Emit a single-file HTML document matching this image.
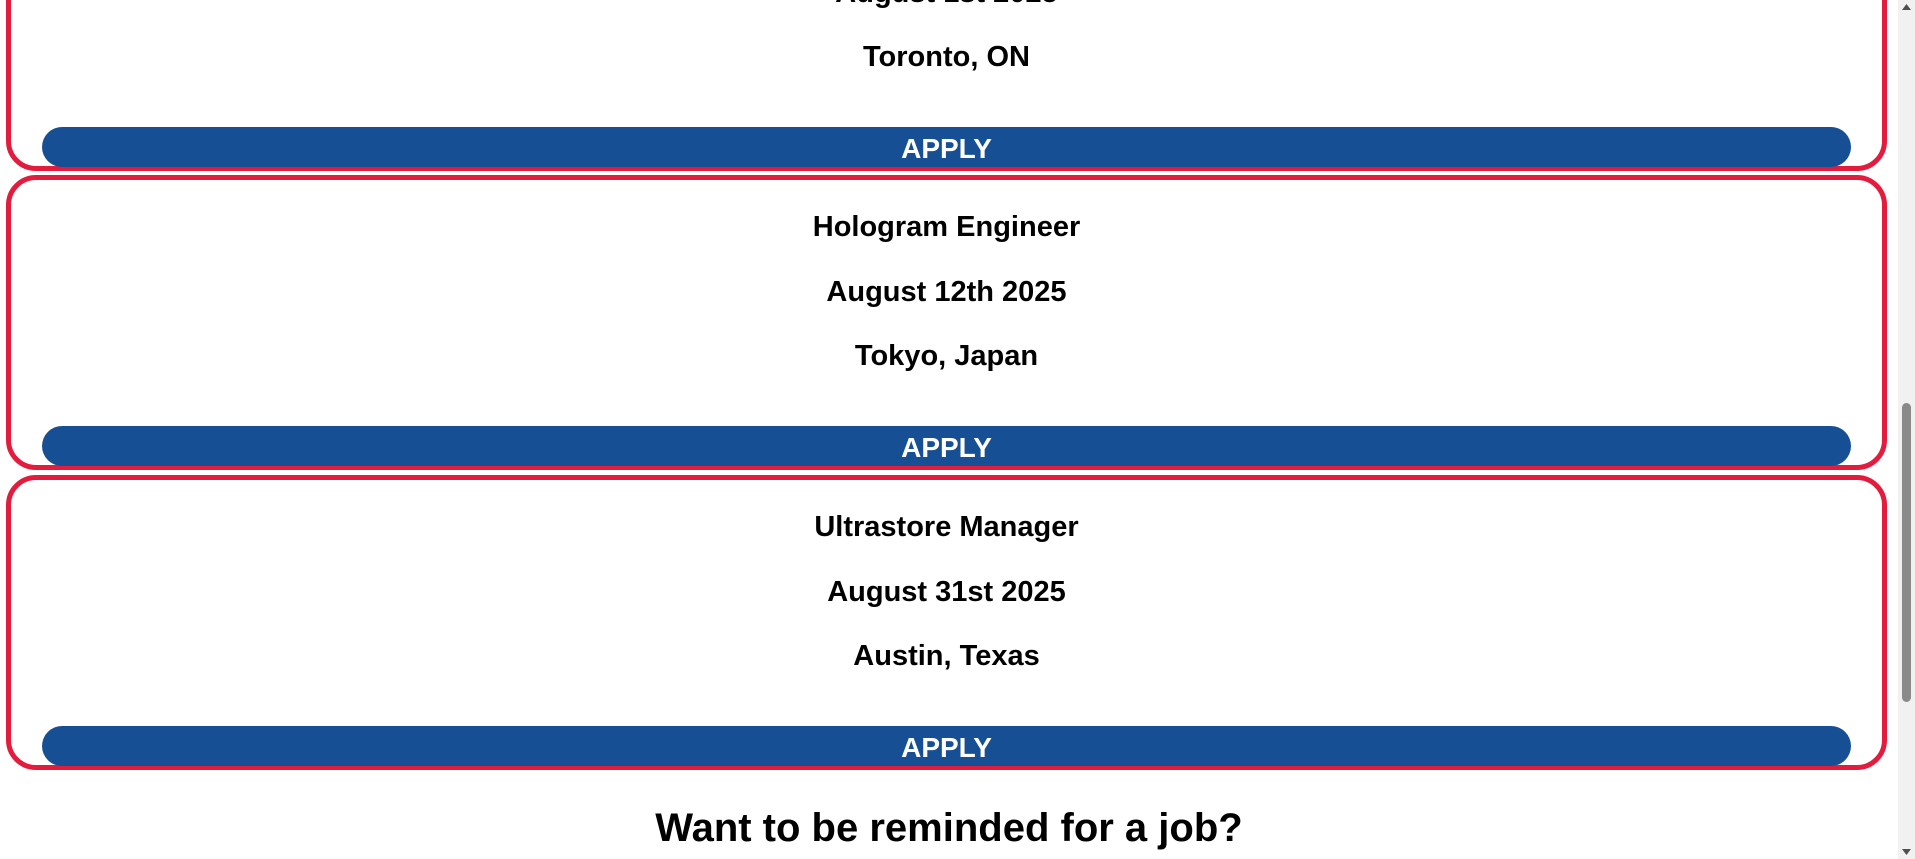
<!DOCTYPE html>
<html><head><meta charset="utf-8"><style>
html,body{margin:0;padding:0;width:1915px;height:859px;overflow:hidden;background:#fff;font-family:"Liberation Sans",Arial,sans-serif;}
.card{position:absolute;left:6px;width:1871px;height:285px;border:5px solid #e31b3d;border-radius:30px;box-sizing:content-box;}
.t{position:absolute;left:0;right:0;text-align:center;font-weight:bold;font-size:29px;color:#000;line-height:30px;}
.btn{position:absolute;left:31px;right:31px;top:246px;height:40px;background:#174f95;border-radius:20px;color:#fff;font-weight:bold;font-size:28px;text-align:center;line-height:44px;}
h2{position:absolute;left:0;width:1898px;top:806px;margin:0;text-align:center;font-size:40px;line-height:44px;font-weight:bold;}
.sb{position:absolute;right:0;top:0;width:17px;height:859px;background:#f1f1f1;}
.thumb{position:absolute;left:4px;width:9px;top:403px;height:299px;background:#8a8a8a;border-radius:5px;}
</style></head><body>
<div class="card" style="top:-124px;">
<div class="t" style="top:32px;">Software Developer</div>
<div class="t" style="top:97px;">August 1st 2025</div>
<div class="t" style="top:161px;">Toronto, ON</div>
<div class="btn">APPLY</div></div>
<div class="card" style="top:175px;">
<div class="t" style="top:32px;">Hologram Engineer</div>
<div class="t" style="top:97px;">August 12th 2025</div>
<div class="t" style="top:161px;">Tokyo, Japan</div>
<div class="btn">APPLY</div></div>
<div class="card" style="top:475px;">
<div class="t" style="top:32px;">Ultrastore Manager</div>
<div class="t" style="top:97px;">August 31st 2025</div>
<div class="t" style="top:161px;">Austin, Texas</div>
<div class="btn">APPLY</div></div>
<h2>Want to be reminded for a job?</h2>
<div class="sb"><div class="thumb"></div>
<svg style="position:absolute;top:4px;left:4px" width="9" height="6"><polygon points="4.5,0 9,6 0,6" fill="#505050"/></svg>
<svg style="position:absolute;bottom:4px;left:4px" width="9" height="6"><polygon points="0,0 9,0 4.5,6" fill="#505050"/></svg>
</div>
</body></html>
